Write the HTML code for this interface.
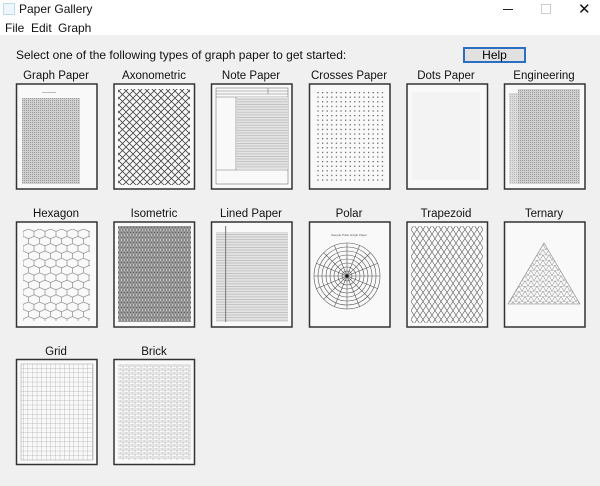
<!DOCTYPE html>
<html><head><style>
html,body{margin:0;padding:0;width:600px;height:486px;overflow:hidden;background:#f0f0f0;font-family:"Liberation Sans",sans-serif;}
.t{position:absolute;font-size:12px;color:#111;}
</style></head><body>
<div style="position:absolute;left:0;top:0;width:600px;height:35px;background:#fff"></div>
<div style="position:absolute;left:3px;top:3px;width:10px;height:10px;border:1px solid #bde;background:#eef6fb"></div>
<div class="t" style="left:19px;top:2px">Paper Gallery</div>
<div style="position:absolute;left:503px;top:9px;width:10px;height:1px;background:#222"></div>
<div style="position:absolute;left:541px;top:4px;width:8px;height:8px;border:1px solid #ccc"></div>
<div class="t" style="left:578px;top:0px;font-size:15px">✕</div>
<div class="t" style="left:5px;top:21px">File</div>
<div class="t" style="left:31px;top:21px">Edit</div>
<div class="t" style="left:58px;top:21px">Graph</div>
<div class="t" style="left:16px;top:48px">Select one of the following types of graph paper to get started:</div>
<div style="position:absolute;left:464px;top:48px;width:59px;height:12px;border:1px solid #2b6fc2;outline:1px solid #2b6fc2;background:#e1e1e1;font-size:12px;text-align:center;line-height:12px">Help</div>
<svg width="600" height="486" style="position:absolute;left:0;top:0" xmlns="http://www.w3.org/2000/svg" font-family="Liberation Sans, sans-serif" font-size="11.5" text-anchor="middle" fill="#111">
<defs>
<pattern id="fine" width="2" height="2" patternUnits="userSpaceOnUse"><rect width="2" height="2" fill="#d0d0d0"/><rect width="1" height="1" fill="#9a9a9a"/></pattern>
<pattern id="axo" width="7" height="7" patternUnits="userSpaceOnUse"><path d="M0 0L7 7M7 0L0 7" stroke="#444" stroke-width="0.8" fill="none"/></pattern>
<pattern id="dots" width="4.6" height="4.6" patternUnits="userSpaceOnUse"><rect width="1.2" height="1.2" fill="#555"/></pattern>
<pattern id="hex" x="23" y="229" width="11" height="14.6" patternUnits="userSpaceOnUse"><path d="M5.5 0L11 2.43V7.3L5.5 9.73L0 7.3V2.43ZM5.5 9.73V14.6" stroke="#777" stroke-width="0.6" fill="none"/></pattern>
<pattern id="iso" width="3" height="5" patternUnits="userSpaceOnUse"><rect width="3" height="5" fill="#c4c4c4"/><path d="M0 0L3 5M3 0L0 5M0 2.5H3" stroke="#666" stroke-width="0.6"/></pattern>
<pattern id="lines" width="4" height="2.6" patternUnits="userSpaceOnUse"><rect width="4" height="2.6" fill="#e4e4e4"/><rect width="4" height="0.8" fill="#bbb"/></pattern>
<pattern id="trap" width="6" height="9" patternUnits="userSpaceOnUse"><path d="M0 0L6 9M6 0L0 9" stroke="#555" stroke-width="0.6"/></pattern>
<pattern id="grid" width="4.6" height="4.6" patternUnits="userSpaceOnUse"><path d="M0 0H4.6M0 0V4.6" stroke="#aaa" stroke-width="0.7"/></pattern>
<pattern id="brick" width="6" height="4" patternUnits="userSpaceOnUse"><path d="M0 0H6M0 2H6M0 0V2M3 2V4" stroke="#aaa" stroke-width="0.6"/></pattern>
<pattern id="tern" width="6" height="5.2" patternUnits="userSpaceOnUse"><path d="M0 5.2L3 0L6 5.2M0 0H6" stroke="#888" stroke-width="0.5" fill="none"/></pattern>
</defs>
<g fill="#f9f9f9" stroke="#333" stroke-width="1.5">
<rect x="16.5" y="84" width="80.5" height="105"/><rect x="114" y="84" width="80.5" height="105"/><rect x="211.5" y="84" width="80.5" height="105"/><rect x="309.5" y="84" width="80.5" height="105"/><rect x="407" y="84" width="80.5" height="105"/><rect x="504.5" y="84" width="80.5" height="105"/>
<rect x="16.5" y="222" width="80.5" height="105"/><rect x="114" y="222" width="80.5" height="105"/><rect x="211.5" y="222" width="80.5" height="105"/><rect x="309.5" y="222" width="80.5" height="105"/><rect x="407" y="222" width="80.5" height="105"/><rect x="504.5" y="222" width="80.5" height="105"/>
<rect x="16.5" y="359.5" width="80.5" height="105"/><rect x="114" y="359.5" width="80.5" height="105"/>
</g>
<text x="56" y="79">Graph Paper</text><text x="154" y="79">Axonometric</text><text x="251" y="79">Note Paper</text><text x="349" y="79">Crosses Paper</text><text x="446" y="79">Dots Paper</text><text x="544" y="79">Engineering</text>
<text x="56" y="217">Hexagon</text><text x="154" y="217">Isometric</text><text x="251" y="217">Lined Paper</text><text x="349" y="217">Polar</text><text x="446" y="217">Trapezoid</text><text x="544" y="217">Ternary</text>
<text x="56" y="355">Grid</text><text x="154" y="355">Brick</text>
<rect x="22" y="98" width="58" height="86" fill="url(#fine)"/>
<rect x="42" y="92" width="14" height="1" fill="#bbb"/>
<rect x="118" y="89" width="72" height="96" fill="url(#axo)"/>
<rect x="216" y="88" width="72" height="96" fill="none" stroke="#777" stroke-width="0.6"/>
<path d="M216 91H288M216 94H288M216 97H288M236 97V170M216 170H288M268 88V94" stroke="#777" stroke-width="0.6"/>
<rect x="237" y="97" width="51" height="72" fill="url(#lines)"/>
<rect x="316" y="91" width="70" height="92" fill="url(#dots)"/>
<rect x="412" y="92" width="68" height="88" fill="#f3f3f3"/>
<rect x="509" y="93" width="10" height="91" fill="url(#fine)" opacity="0.7"/>
<rect x="518" y="89" width="62" height="95" fill="url(#fine)"/>
<rect x="23" y="229" width="67" height="92" fill="url(#hex)"/>
<rect x="118" y="226" width="73" height="96" fill="url(#iso)"/>
<rect x="216" y="232" width="72" height="90" fill="url(#lines)"/>
<rect x="225" y="226" width="1.2" height="96" fill="#888"/>
<text x="349" y="236" font-size="3" fill="#555">Sample Polar Graph Paper</text>
<g fill="none" stroke="#555" stroke-width="0.6">
<circle cx="347" cy="276" r="33"/><circle cx="347" cy="276" r="29"/><circle cx="347" cy="276" r="25"/><circle cx="347" cy="276" r="21"/><circle cx="347" cy="276" r="17"/><circle cx="347" cy="276" r="13"/><circle cx="347" cy="276" r="9"/><circle cx="347" cy="276" r="5"/>
<path d="M314 276H380M347 243V309M323.7 252.7L370.3 299.3M370.3 252.7L323.7 299.3M316.5 263.4L377.5 288.6M377.5 263.4L316.5 288.6M334.4 245.5L359.6 306.5M359.6 245.5L334.4 306.5"/>
</g><circle cx="347" cy="276" r="1.5" fill="#111"/>
<rect x="411" y="226" width="72" height="97" fill="url(#trap)"/>
<path d="M544 243L580 304H508Z" fill="url(#tern)" stroke="#888" stroke-width="0.6"/>
<rect x="21" y="364" width="72" height="96" fill="url(#grid)" stroke="#aaa" stroke-width="0.6"/>
<rect x="118" y="364" width="73" height="96" fill="url(#brick)"/>
</svg>
</body></html>
